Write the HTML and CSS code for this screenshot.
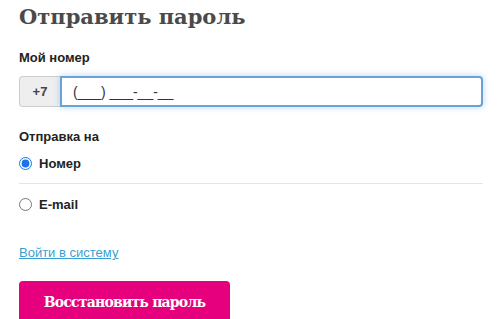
FILE: index.html
```html
<!DOCTYPE html>
<html lang="ru">
<head>
  <meta charset="UTF-8">
  <title>Отправить пароль</title>
  <link rel="stylesheet" href="styles.css">
</head>
<body>

<div class="form">
  <h1>Отправить пароль</h1>

  <label class="label">Мой номер</label>
  <div class="phone">
    <span class="prefix">+7</span>
    <input class="phone-input" type="text" value="(___) ___-__-__">
  </div>

  <p class="label send-to">Отправка на</p>
  <label class="option">
    <input type="radio" name="send" checked>
    <span>Номер</span>
  </label>
  <label class="option option-last">
    <input type="radio" name="send">
    <span>E-mail</span>
  </label>

  <a class="login-link" href="#">Войти в систему</a>

  <button class="submit">Восстановить пароль</button>
</div>

</body>
</html>
```

FILE: styles.css
```css
body {
  margin: 0;
  font-family: 'Liberation Sans', Arial, sans-serif;
  color: #222;
  background: #fff;
}

.form {
  padding: 0 17px 0 19px;
}

h1 {
  font-family: 'DejaVu Serif', serif;
  font-size: 21px;
  font-weight: bold;
  color: #4a4a4a;
  margin: 4px 0 0;
  line-height: 26px;
}

.label {
  display: block;
  font-size: 13px;
  font-weight: bold;
  margin: 20px 0 10px;
  line-height: 16px;
}

.phone {
  display: flex;
  height: 31px;
}

.prefix {
  width: 40px;
  display: flex;
  align-items: center;
  justify-content: center;
  background: #eee;
  border: 1px solid #ccc;
  border-right: none;
  border-radius: 4px 0 0 4px;
  font-size: 13px;
  font-weight: bold;
  color: #444;
}

.phone-input {
  flex: 1;
  border: 2px solid #6aa3d3;
  border-radius: 0 4px 4px 0;
  box-shadow: 0 0 6px rgba(102, 175, 233, 0.5);
  padding: 0 11px;
  font-family: 'Liberation Sans', Arial, sans-serif;
  font-size: 14px;
  color: #333;
  outline: none;
}

.send-to {
  margin-top: 22px;
  margin-bottom: 8px;
}

.option {
  display: flex;
  align-items: center;
  gap: 7px;
  font-size: 13px;
  font-weight: bold;
  height: 20px;
  padding-bottom: 10px;
  border-bottom: 1px solid #e5e5e5;
}

.option input {
  margin: 0;
  width: 13px;
  height: 13px;
  accent-color: #1a73e8;
}

.option-last {
  border-bottom: none;
  padding-top: 10px;
}

.login-link {
  display: inline-block;
  margin-top: 21px;
  font-size: 13px;
  color: #3a9fd0;
  text-decoration: underline;
}

.submit {
  display: block;
  margin-top: 20px;
  width: 211px;
  height: 42px;
  border: none;
  border-radius: 4px;
  background: #e6007e;
  color: #fff;
  font-family: 'DejaVu Serif', serif;
  font-size: 14px;
  letter-spacing: -0.8px;
  font-weight: bold;
  cursor: pointer;
}
```
